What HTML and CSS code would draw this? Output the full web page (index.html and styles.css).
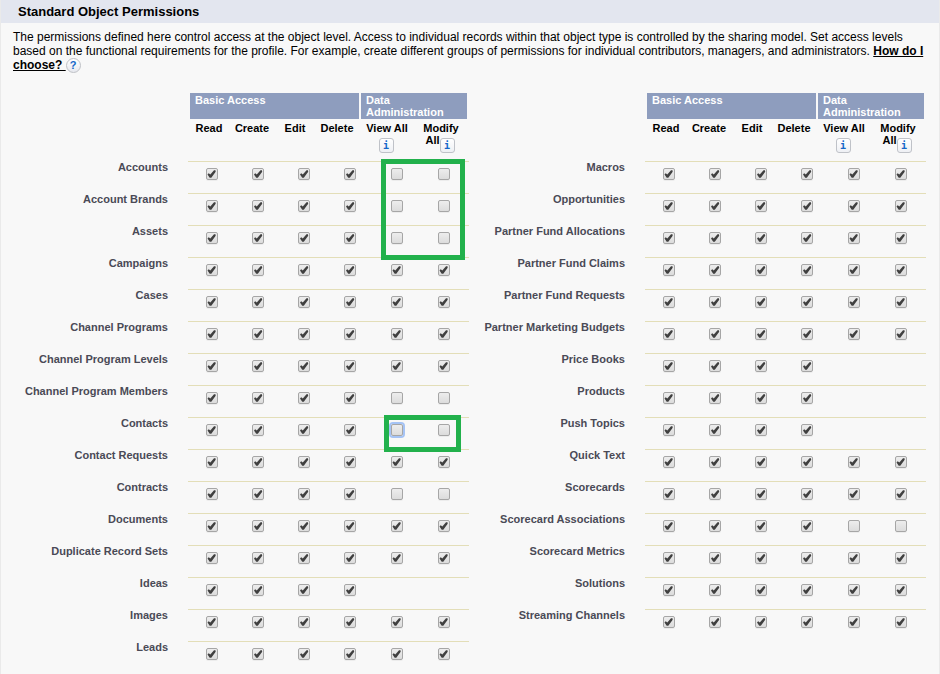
FILE: index.html
```html
<!DOCTYPE html>
<html lang="en">
<head>
<meta charset="utf-8">
<title>Standard Object Permissions</title>
<link rel="stylesheet" href="styles.css">
</head>
<body>
<main class="panel">
  <h1 class="panel-title">Standard Object Permissions</h1>
  <p class="intro">The permissions defined here control access at the object level. Access to individual records within that object type is controlled by the sharing model. Set access levels based on the functional requirements for the profile. For example, create different groups of permissions for individual contributors, managers, and administrators. <a class="help" href="#help">How do I choose?&nbsp;</a><span class="help-icon">?</span></p>
  <div class="columns">
    <div class="column">
      <table class="perms" id="perms-left"></table>
      <div class="mark mark-top"></div>
      <div class="mark mark-contacts"></div>
    </div>
    <div class="column">
      <table class="perms" id="perms-right"></table>
    </div>
  </div>
</main>
<script src="permissions.js"></script>
</body>
</html>
```
FILE: permissions.js
```js
// One character per permission: 1 = granted, 0 = not granted, missing = not offered.
const actions = ["Read", "Create", "Edit", "Delete", "View All", "Modify All"];

const left = [
  ["Accounts", "111100"], ["Account Brands", "111100"], ["Assets", "111100"],
  ["Campaigns", "111111"], ["Cases", "111111"], ["Channel Programs", "111111"],
  ["Channel Program Levels", "111111"], ["Channel Program Members", "111100"],
  ["Contacts", "111100"], ["Contact Requests", "111111"], ["Contracts", "111100"],
  ["Documents", "111111"], ["Duplicate Record Sets", "111111"], ["Ideas", "1111"],
  ["Images", "111111"], ["Leads", "111111"]
];

const right = [
  ["Macros", "111111"], ["Opportunities", "111111"], ["Partner Fund Allocations", "111111"],
  ["Partner Fund Claims", "111111"], ["Partner Fund Requests", "111111"],
  ["Partner Marketing Budgets", "111111"], ["Price Books", "1111"], ["Products", "1111"],
  ["Push Topics", "1111"], ["Quick Text", "111111"], ["Scorecards", "111111"],
  ["Scorecard Associations", "111100"], ["Scorecard Metrics", "111111"],
  ["Solutions", "111111"], ["Streaming Channels", "111111"]
];

const head = `
  <thead>
    <tr class="groups"><td></td><th>Basic Access</th><th>Data Administration</th></tr>
    <tr class="actions"><td></td><th>Read</th><th>Create</th><th>Edit</th><th>Delete</th>
      <th>View All<br><span class="info">i</span></th><th>Modify All<span class="info">i</span></th></tr>
  </thead>`;

function row([name, flags]) {
  const cells = actions.map((action, i) => {
    if (flags[i] === undefined) return "<td></td>";
    const state = (flags[i] === "1" ? " checked" : "") +
      (name === "Contacts" && i === 4 ? ' class="focused"' : "");
    return `<td><input type="checkbox" aria-label="${name}: ${action}"${state}></td>`;
  }).join("");
  return `<tr class="object"><th scope="row">${name}</th>${cells}</tr>`;
}

function render(id, rows) {
  document.getElementById(id).innerHTML = head + "<tbody>" + rows.map(row).join("") + "</tbody>";
}

render("perms-left", left);
render("perms-right", right);
```
FILE: styles.css
```css
* { box-sizing: border-box; }

body {
  margin: 0;
  background: #f8f8f8;
  color: #000;
  font: 12px/14px "Liberation Sans", Arial, sans-serif;
}

.panel {
  min-height: 100vh;
  border: solid #eaeaea;
  border-width: 0 1px;
}

.panel-title {
  margin: 0;
  padding: 0 17px;
  background: #e3e6ef;
  font-size: 13px;
  line-height: 23px;
}

.intro {
  margin: 0;
  padding: 7px 12px 0;
}

.help {
  color: #000;
  font-weight: bold;
}

.help-icon {
  display: inline-block;
  width: 15px;
  height: 15px;
  margin: 0 0 -4px;
  border: 1px solid #bfc1c6;
  border-radius: 50%;
  background: linear-gradient(#fff, #e6e8ee);
  color: #1467c8;
  font-size: 11px;
  font-weight: bold;
  line-height: 13px;
  text-align: center;
}

.columns {
  display: grid;
  grid-template-columns: 1fr 1fr;
  align-items: start;
  padding: 21px 13px 0 11px;
}

.column { position: relative; }

.perms,
.perms thead,
.perms tbody { display: block; }

.perms tr { display: grid; }

.perms th,
.perms td { padding: 0; }

.groups {
  grid-template-columns: 1fr 169px 106px;
  column-gap: 2px;
  padding-right: 2px;
  font-size: 11px;
  line-height: 12px;
}

.perms .groups th {
  padding: 1px 5px;
  background: #8e9dbe;
  color: #fff;
  text-align: left;
}

.actions {
  grid-template-columns: 1fr 42px 44px 42px 42px 58px 50px;
  height: 42px;
  padding: 3px 3px 0 0;
  font-size: 11px;
  line-height: 12px;
}

.info {
  display: inline-block;
  width: 15px;
  height: 15px;
  margin: -4px 2px -4px 0;
  border: 1px solid #bfc2c8;
  border-radius: 3px;
  background: linear-gradient(#fff, #eef0f4);
  color: #1467c8;
  font: bold 10px/13px "DejaVu Sans Mono", monospace;
  text-align: center;
  vertical-align: -5px;
}

.perms .object {
  grid-template-columns: 1fr 47px 46px 46px 46px 47px 49px;
  height: 32px;
  font-size: 11px;
  line-height: 13px;
}

.perms .object th {
  padding-right: 20px;
  color: #4a4a56;
  text-align: right;
}

.perms .object td {
  border-top: 1px solid #e3deb8;
  padding-top: 6px;
}

.perms .object td:last-child { padding-right: 2px; }

.object input {
  appearance: none;
  display: block;
  width: 12px;
  height: 12px;
  margin: 0 auto;
  border: 1px solid #a6a6a6;
  border-radius: 2px;
  background: linear-gradient(#ededed, #dcdcdc);
  box-shadow: 0 1px 0 #ececec;
}

.object input:checked::before {
  content: "";
  display: block;
  width: 10px;
  height: 10px;
  background: #404040;
  clip-path: polygon(10% 55%, 22% 42%, 38% 55%, 75% 12%, 90% 12%, 92% 28%, 48% 88%, 32% 88%);
}

.object .focused { box-shadow: 0 0 0 2px #a5c3f5; }

.mark {
  position: absolute;
  border: 5px solid #22b14c;
  pointer-events: none;
}

.mark-top {
  top: 66px;
  right: 4px;
  width: 84px;
  height: 101px;
}

.mark-contacts {
  top: 322px;
  right: 8px;
  width: 77px;
  height: 37px;
}
```
